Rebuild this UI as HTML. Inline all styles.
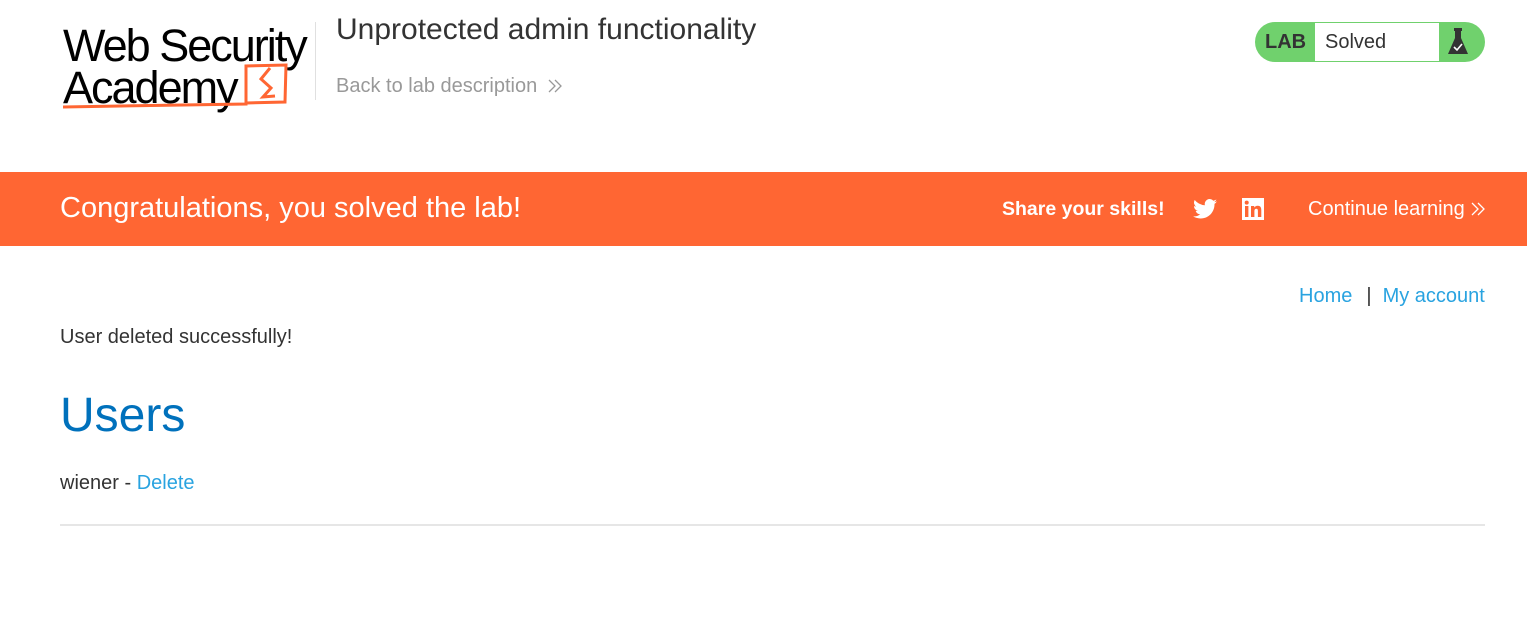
<!DOCTYPE html>
<html><head><meta charset="utf-8"><style>
*{margin:0;padding:0;box-sizing:border-box}
body{width:1527px;height:626px;background:#fff;font-family:"Liberation Sans",Arial,sans-serif;color:#333;position:relative;overflow:hidden}
.abs{position:absolute}
.logo{left:63px;top:18px;width:250px;height:95px}
.logo .t{position:absolute;left:0;font-size:45px;letter-spacing:-2px;color:#000;line-height:1;white-space:nowrap}
.vline{left:315px;top:22px;width:1px;height:78px;background:#e0e0e0}
h2{left:336px;top:13px;font-size:30px;font-weight:normal;color:#333;white-space:nowrap}
.back{left:336px;top:75px;font-size:20px;color:#999;white-space:nowrap}
.badge{left:1255px;top:22px;width:230px;height:40px;background:#70d16d;border-radius:20px}
.badge .lab{position:absolute;left:10px;top:9px;font-weight:bold;font-size:20px;color:#333}
.badge .st{position:absolute;left:60px;top:1px;width:124px;height:38px;background:#fff;font-size:20px;padding:8px 10px;color:#333}
.banner{left:0;top:172px;width:1527px;height:74px;background:#ff6633;color:#fff}
.banner .c{position:absolute;left:60px;top:20px;font-size:29px;white-space:nowrap}
.banner .s{position:absolute;left:1002px;top:26px;font-size:19.5px;font-weight:bold;white-space:nowrap}
.banner .cl{position:absolute;left:1308px;top:26px;font-size:20px;white-space:nowrap}
a{color:#29a3e0;text-decoration:none}
.nav{left:1299px;top:285px;font-size:20px;white-space:nowrap}
.msg{left:60px;top:326px;font-size:20px}
h1{left:60px;top:388px;font-size:48px;font-weight:normal;color:#0071bc}
.u{left:60px;top:472px;font-size:20px}
.hr{left:60px;top:524px;width:1425px;height:2px;background:#e6e6e6}
</style></head><body>
<div class="abs logo">
<div class="t" style="top:5px">Web Security</div>
<div class="t" style="top:47px">Academy</div>
<svg class="abs" style="left:0;top:0" width="250" height="95" viewBox="0 0 250 95">
<path d="M-2 89 L183 86 L183 48 L223 47 L222 84 L183 85" fill="none" stroke="#ff6633" stroke-width="3"/>
<path d="M207 50 L198 61 L208 70 L200 79 L212 78" fill="none" stroke="#ff6633" stroke-width="3"/>
</svg>
</div>
<div class="abs vline"></div>
<h2 class="abs">Unprotected admin functionality</h2>
<div class="abs back">Back to lab description</div>
<svg class="abs" style="left:548px;top:79px" width="14" height="14" viewBox="0 0 14 14"><path d="M1 1l6 6-6 6M7 1l6 6-6 6" fill="none" stroke="#999" stroke-width="1.3"/></svg>
<div class="abs badge"><span class="lab">LAB</span><div class="st">Solved</div>
<svg class="abs" style="left:192px;top:6px" width="22" height="28" viewBox="0 0 22 28"><rect x="7" y="0" width="8" height="3" fill="#333"/><path d="M8 3 V10 L1 26 H21 L14 10 V3" fill="#333"/><path d="M7 19 L10 22 L15 16" stroke="#fff" stroke-width="1.6" fill="none"/></svg>
</div>
<div class="abs banner"><span class="c">Congratulations, you solved the lab!</span><span class="s">Share your skills!</span>
<svg class="abs" style="left:1193px;top:27px" width="24" height="20" viewBox="0 0 24 20"><path d="M24 2.4c-.9.4-1.8.6-2.8.8 1-.6 1.8-1.6 2.2-2.7-1 .6-2 1-3.1 1.2A4.9 4.9 0 0 0 11.9 6.2 14 14 0 0 1 1.7 1 4.9 4.9 0 0 0 3.2 7.6c-.8 0-1.6-.3-2.2-.6 0 2.4 1.7 4.4 3.9 4.8-.7.2-1.5.2-2.2.1.6 2 2.4 3.4 4.6 3.4A9.9 9.9 0 0 1 0 17.3 14 14 0 0 0 7.5 19.5c9.1 0 14-7.5 14-14v-.6c1-.7 1.8-1.6 2.5-2.5z" fill="#fff"/></svg>
<svg class="abs" style="left:1242px;top:26px" width="22" height="22" viewBox="0 0 22 22"><rect width="22" height="22" fill="#fff"/><rect x="3" y="8" width="3.4" height="11" fill="#ff6633"/><circle cx="4.7" cy="4.6" r="2" fill="#ff6633"/><path d="M9 8h3.2v1.6c.6-1 1.8-1.9 3.5-1.9 3 0 3.6 2 3.6 4.5V19h-3.4v-6c0-1.3-.3-2.3-1.6-2.3s-1.9 1-1.9 2.3v6H9z" fill="#ff6633"/></svg>
<span class="cl">Continue learning</span>
<svg class="abs" style="left:1471px;top:30px" width="14" height="14" viewBox="0 0 14 14"><path d="M1 1l6 6-6 6M7 1l6 6-6 6" fill="none" stroke="#fff" stroke-width="1.3"/></svg>
</div>
<div class="abs nav"><a>Home</a><span style="margin:0 11px 0 14px">|</span><a>My account</a></div>
<div class="abs msg">User deleted successfully!</div>
<h1 class="abs">Users</h1>
<div class="abs u">wiener - <a>Delete</a></div>
<div class="abs hr"></div>
</body></html>
